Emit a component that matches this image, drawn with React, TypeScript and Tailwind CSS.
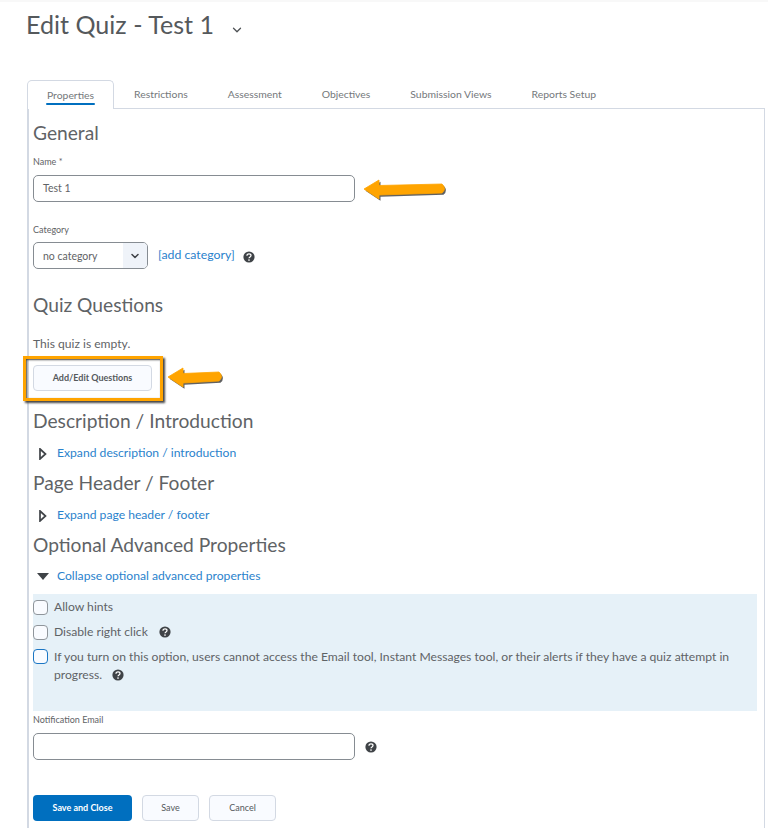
import { ChevronDown } from 'lucide-react';

const tabs = ['Restrictions', 'Assessment', 'Objectives', 'Submission Views', 'Reports Setup'];

function Help({ className = '' }: { className?: string }) {
  return (
    <svg viewBox="0 0 12 12" className={`w-[12px] h-[12px] shrink-0 ${className}`}>
      <circle cx="6" cy="6" r="5.6" fill="#3f4347" />
      <path d="M4 4.7c0-1.2 1-1.8 2-1.8s2 .6 2 1.7c0 1.400-2 1.400-2 2.700" fill="none" stroke="#fff" strokeWidth="1.300" />
      <circle cx="6" cy="9" r=".85" fill="#fff" />
    </svg>
  );
}

function Arrow({ className, tail }: { className: string; tail: number }) {
  const d = `M2 11 L17 2 L17 7.500 L${tail} 6 Q${tail + 5} 10.500 ${tail} 15 L17 17 L17 21 Z`;
  return (
    <svg viewBox={`0 0 ${tail + 8} 25`} width={tail + 8} height={25} className={`absolute ${className}`}>
      <path d={d} fill="#3a3a3a" opacity="0.8" transform="translate(1.500 1.700)" />
      <path d={d} fill="#ffa400" stroke="#ffa400" strokeWidth="0.8" strokeLinejoin="round" />
    </svg>
  );
}

function Checkbox({ focused = false }: { focused?: boolean }) {
  return (
    <span
      className={`block w-[15px] h-[15px] shrink-0 rounded-[4px] bg-[#f9fbff] border ${
        focused ? 'border-[#1b76c4]' : 'border-[#8f959b]'
      }`}
    />
  );
}

function Heading({ children, className = '' }: { children: string; className?: string }) {
  return <h2 className={`text-[19.2px] leading-[24px] text-[#5f6366] ${className}`}>{children}</h2>;
}

function Disclosure({ label, open = false, className = '' }: { label: string; open?: boolean; className?: string }) {
  return (
    <div className={`flex items-center h-[18px] ${className}`}>
      <span className="w-[24px] flex justify-center pr-[4px]">
        {open ? (
          <svg viewBox="0 0 12 7" className="w-[12px] h-[7px]">
            <path d="M0 0H12L6 7Z" fill="#3f4347" />
          </svg>
        ) : (
          <svg viewBox="0 0 8 12" className="w-[8px] h-[12px] mt-px">
            <path d="M1 1L6.500 6L1 11Z" fill="#fff" stroke="#3f4347" strokeWidth="1.700" />
          </svg>
        )}
      </span>
      <a className="text-[12.15px] text-[#2a82cc]">{label}</a>
    </div>
  );
}

export default function App() {
  return (
    <div className="relative w-[768px] h-[828px] overflow-hidden bg-white font-['Lato','Open_Sans',sans-serif] text-[#5f6366]">
      <div className="h-[2px] bg-[#f8f8f8]" />
      <header className="flex items-center pl-[26px] h-[45px]">
        <h1 className="text-[25.1px] leading-[45px] text-[#55595c]">Edit Quiz - Test 1</h1>
        <ChevronDown className="w-[14px] h-[14px] ml-[16px] mt-[11px] text-[#4e5255]" strokeWidth={2.2} />
      </header>

      <nav className="flex mt-[33px] ml-[27px] h-[29px] relative z-10 text-[10.4px] text-[#74787b]">
        <div className="w-[87px] h-[29px] bg-white border border-b-0 border-[#d3d9e3] rounded-t-[5px] flex flex-col items-center pt-[8px]">
          <span className="leading-[13px]">Properties</span>
          <span className="block w-[49px] h-[2px] mt-px bg-[#006fbf] rounded-full" />
        </div>
        {tabs.map((tab) => (
          <span key={tab} className="px-[20px] pt-[8px] leading-[13px] whitespace-nowrap">
            {tab}
          </span>
        ))}
      </nav>

      <main className="-mt-px ml-[27px] w-[738px] h-[720px] border-l-2 border-r border-t border-[#d3d9e3] pl-[4px] pr-[6px]">
        <Heading className="mt-[12px]">General</Heading>
        <label className="block mt-[11px] text-[9px] leading-[12px]">Name *</label>
        <div className="mt-[7px] w-[322px] h-[27px] rounded-[5px] border border-[#868c92] flex items-center pl-[9px] text-[10.5px]">
          Test 1
        </div>
        <label className="block mt-[22px] text-[9px] leading-[12px]">Category</label>
        <div className="flex items-center mt-[6px]">
          <div className="w-[115px] h-[27px] rounded-[5px] border border-[#868c92] flex overflow-hidden">
            <span className="flex-1 pl-[9px] text-[10.5px] leading-[26px]">no category</span>
            <span className="w-[24px] bg-[#eff3f9] flex items-center justify-center">
              <ChevronDown className="w-[12px] h-[12px] text-[#3f4347]" strokeWidth={3} />
            </span>
          </div>
          <a className="ml-[10px] text-[12.3px] text-[#2a82cc]">[add category]</a>
          <Help className="ml-[8px] mt-[2px]" />
        </div>

        <Heading className="mt-[24px]">Quiz Questions</Heading>
        <p className="mt-[19px] text-[12.1px] leading-[16px]">This quiz is empty.</p>
        <button className="block mt-[13px] w-[119px] h-[26px] rounded-[4px] border border-[#d3d9e3] bg-[#f9fbff] text-[9px] font-bold text-[#55595c]">
          Add/Edit Questions
        </button>

        <Heading className="mt-[18px]">Description / Introduction</Heading>
        <Disclosure label="Expand description / introduction" className="mt-[11px]" />
        <Heading className="mt-[9px]">Page Header / Footer</Heading>
        <Disclosure label="Expand page header / footer" className="mt-[11px]" />
        <Heading className="mt-[9px]">Optional Advanced Properties</Heading>
        <Disclosure label="Collapse optional advanced properties" open className="mt-[10px]" />

        <section className="mt-[9px] w-[724px] h-[117px] bg-[#e6f1f8] pt-[5px] text-[12.15px]">
          <div className="flex items-center gap-[6px] h-[16px]">
            <Checkbox />
            <span>Allow hints</span>
          </div>
          <div className="flex items-center gap-[6px] h-[16px] mt-[9px]">
            <Checkbox />
            <span>Disable right click</span>
            <Help className="ml-[5px]" />
          </div>
          <div className="flex gap-[6px] mt-[9px]">
            <Checkbox focused />
            <p className="leading-[18px] w-[690px] -mt-px">
              If you turn on this option, users cannot access the Email tool, Instant Messages tool, or their alerts if they have a quiz attempt in progress.
              <Help className="inline-block ml-[10px] -mt-[2px]" />
            </p>
          </div>
        </section>

        <label className="block mt-[3px] text-[9px] leading-[12px]">Notification Email</label>
        <div className="flex items-center mt-[7px]">
          <div className="w-[322px] h-[27px] rounded-[5px] border border-[#868c92]" />
          <Help className="ml-[10px]" />
        </div>

        <div className="flex gap-[10px] mt-[35px] text-[9px]">
          <button className="w-[99px] h-[26px] rounded-[4px] bg-[#006fbf] text-white font-bold">Save and Close</button>
          <button className="w-[57px] h-[26px] rounded-[4px] border border-[#d3d9e3] bg-[#f9fbff] text-[#55595c]">Save</button>
          <button className="w-[67px] h-[26px] rounded-[4px] border border-[#d3d9e3] bg-[#f9fbff] text-[#55595c]">Cancel</button>
        </div>
      </main>

      {/* annotations drawn over the screenshot */}
      <div className="absolute left-[23px] top-[356px] w-[140px] h-[45px] border-[3px] border-[#ffa400] shadow-[2px_2px_2px_#444,inset_1px_1px_2px_#444]" />
      <Arrow className="left-[362px] top-[178px]" tail={80} />
      <Arrow className="left-[166px] top-[366px]" tail={53} />
    </div>
  );
}
